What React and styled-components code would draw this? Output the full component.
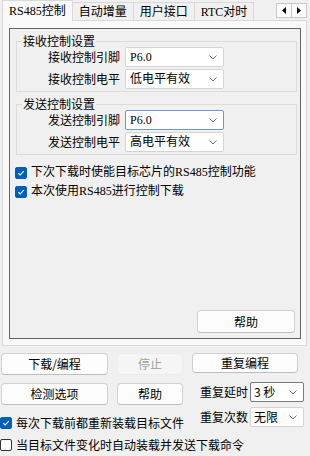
import React from 'react';
import styled, { createGlobalStyle } from 'styled-components';

const GlobalStyle = createGlobalStyle`
  html, body {
    margin: 0;
    padding: 0;
    background: #f0f0f0;
  }
  body {
    font-family: "Liberation Serif", "Noto Sans CJK SC", serif;
    font-size: 12px;
    color: #000;
  }
`;

const Check = () => (
  <svg width="12" height="12" viewBox="0 0 12 12">
    <path d="M2.8 6.2 L5 8.4 L9.3 3.8" fill="none" stroke="#fff" strokeWidth="1.3" />
  </svg>
);

const Chevron = () => (
  <svg width="8" height="5" viewBox="0 0 8 5">
    <polyline points="0.5,0.5 4,4 7.5,0.5" fill="none" stroke="#707070" strokeWidth="1" />
  </svg>
);

const CheckItem = ({ checked, children }) => (
  <CheckRow>
    <CheckBox $checked={checked}>{checked && <Check />}</CheckBox>
    <span>{children}</span>
  </CheckRow>
);

const Combo = ({ value, focused, dark }) => (
  <ComboBox $focused={focused} $dark={dark}>
    <span>{value}</span>
    <Chevron />
  </ComboBox>
);

const FieldRow = ({ label, value, focused }) => (
  <Row>
    <FieldLabel>{label}</FieldLabel>
    <Combo value={value} focused={focused} />
  </Row>
);

export default function App() {
  return (
    <>
      <GlobalStyle />
      <Window>
        <TabBar>
          <Tab $active>RS485控制</Tab>
          <Tab>自动增量</Tab>
          <Tab>用户接口</Tab>
          <Tab>RTC对时</Tab>
          <TabArrows>
            <ArrowButton>
              <svg width="4" height="7" viewBox="0 0 4 7"><polygon points="4,0 0,3.5 4,7" fill="#000" /></svg>
            </ArrowButton>
            <ArrowButton>
              <svg width="4" height="7" viewBox="0 0 4 7"><polygon points="0,0 4,3.5 0,7" fill="#000" /></svg>
            </ArrowButton>
          </TabArrows>
        </TabBar>

        <Panel>
          <Frame>
            <Group>
              <Legend>接收控制设置</Legend>
              <FieldRow label="接收控制引脚" value="P6.0" />
              <FieldRow label="接收控制电平" value="低电平有效" />
            </Group>
            <Group $spaced>
              <Legend>发送控制设置</Legend>
              <FieldRow label="发送控制引脚" value="P6.0" focused />
              <FieldRow label="发送控制电平" value="高电平有效" />
            </Group>
            <CheckList>
              <CheckItem checked>下次下载时使能目标芯片的RS485控制功能</CheckItem>
              <CheckItem checked>本次使用RS485进行控制下载</CheckItem>
            </CheckList>
            <HelpButton>帮助</HelpButton>
          </Frame>
        </Panel>

        <BottomArea>
          <ButtonRow>
            <Button $w={107}>下载/编程</Button>
            <Button $w={66} disabled>停止</Button>
            <Button $w={106} $h={20}>重复编程</Button>
          </ButtonRow>
          <SplitRow>
            <LeftCol>
              <ButtonRow>
                <Button $w={107}>检测选项</Button>
                <Button $w={66}>帮助</Button>
              </ButtonRow>
              <BottomCheck>
                <CheckItem checked>每次下载前都重新装载目标文件</CheckItem>
              </BottomCheck>
            </LeftCol>
            <RightCol>
              <OptionRow>
                <OptionLabel>重复延时</OptionLabel>
                <SmallCombo>
                  <Combo value="3 秒" dark />
                </SmallCombo>
              </OptionRow>
              <OptionRow>
                <OptionLabel>重复次数</OptionLabel>
                <SmallCombo>
                  <Combo value="无限" />
                </SmallCombo>
              </OptionRow>
            </RightCol>
          </SplitRow>
          <LastCheck>
            <CheckItem>当目标文件变化时自动装载并发送下载命令</CheckItem>
          </LastCheck>
        </BottomArea>
      </Window>
    </>
  );
}

const Window = styled.div`
  width: 310px;
  height: 456px;
  display: flex;
  flex-direction: column;
  overflow: hidden;
`;

const TabBar = styled.div`
  height: 20px;
  display: flex;
  align-items: flex-end;
  padding-left: 2px;
  position: relative;
  z-index: 1;
`;

const Tab = styled.div`
  height: ${({ $active }) => ($active ? '21px' : '18px')};
  margin-bottom: ${({ $active }) => ($active ? '-1px' : '0')};
  line-height: ${({ $active }) => ($active ? '20px' : '19px')};
  padding: 0 6px;
  box-sizing: border-box;
  border: 1px solid #d9d9d9;
  border-bottom: none;
  margin-left: ${({ $active }) => ($active ? '0' : '-1px')};
  background: ${({ $active }) => ($active ? '#f9f9f9' : '#f0f0f0')};
  white-space: nowrap;
`;

const TabArrows = styled.div`
  margin-left: auto;
  margin-right: 3px;
  align-self: flex-start;
  margin-top: 3px;
  display: flex;
  border: 1px solid #c8c8c8;
  background: #fbfbfb;
`;

const ArrowButton = styled.div`
  width: 14px;
  height: 13px;
  display: flex;
  align-items: center;
  justify-content: center;
  & + & {
    border-left: 1px solid #c8c8c8;
  }
`;

const Panel = styled.div`
  margin: 0 3px 0 2px;
  height: 326px;
  box-sizing: border-box;
  border: 1px solid #d9d9d9;
  background: #f9f9f9;
  padding: 7px 5px 6px 6px;
  display: flex;
`;

const Frame = styled.div`
  flex: 1;
  border: 1px solid #646464;
  background: #f0f0f0;
  padding: 6px 3px 5px 5px;
  display: flex;
  flex-direction: column;
`;

const Group = styled.fieldset`
  margin: ${({ $spaced }) => ($spaced ? '6px' : '0')} 0 0 1px;
  border: 1px solid #dcdcdc;
  padding: 0 0 2px 0;
  min-inline-size: 0;
`;

const Legend = styled.legend`
  margin-left: 5px;
  padding: 0 1px;
  line-height: 12px;
  font-family: "Noto Sans CJK SC", sans-serif;
`;

const Row = styled.div`
  display: grid;
  grid-template-columns: 103px 99px;
  column-gap: 5px;
  align-items: center;
  height: 20px;
  & + & {
    margin-top: 2px;
  }
`;

const FieldLabel = styled.div`
  text-align: right;
  line-height: 20px;
  font-family: "Noto Sans CJK SC", sans-serif;
`;

const ComboBox = styled.div`
  height: 20px;
  box-sizing: border-box;
  border: 1px solid ${({ $focused, $dark }) => ($focused ? '#6c9ad0' : $dark ? '#7a7a7a' : '#d4d4d4')};
  border-radius: 2px;
  background: #fff;
  display: flex;
  align-items: center;
  justify-content: space-between;
  padding: 0 6px 0 4px;
  white-space: nowrap;
  line-height: 18px;
`;

const CheckList = styled.div`
  margin-top: 8px;
  display: flex;
  flex-direction: column;
`;

const CheckRow = styled.div`
  display: flex;
  align-items: center;
  gap: 4px;
  height: 19px;
  line-height: 19px;
  white-space: nowrap;
  overflow: hidden;
`;

const CheckBox = styled.div`
  width: 12px;
  height: 12px;
  box-sizing: border-box;
  border-radius: 2px;
  flex-shrink: 0;
  background: ${({ $checked }) => ($checked ? '#005fb8' : '#fff')};
  border: 1px solid ${({ $checked }) => ($checked ? '#005fb8' : '#333')};
  display: flex;
  align-items: center;
  justify-content: center;
  svg {
    display: block;
  }
`;

const Button = styled.button`
  width: ${({ $w }) => $w}px;
  height: ${({ $h }) => $h || 22}px;
  padding: 0;
  box-sizing: border-box;
  border: 1px solid #d0d0d0;
  border-bottom-color: #bcbcbc;
  border-radius: 4px;
  background: #fdfdfd;
  font-family: "Noto Sans CJK SC", sans-serif;
  font-size: 12px;
  color: #000;
  line-height: 18px;

  &:disabled {
    background: #f5f5f5;
    border-color: #ececec;
    color: #a0a0a0;
  }
`;

const HelpButton = styled(Button)`
  width: 98px;
  height: 23px;
  margin-top: auto;
  align-self: flex-end;
  margin-right: 2px;
`;

const BottomArea = styled.div`
  padding-top: 7px;
  display: flex;
  flex-direction: column;
  font-family: "Noto Sans CJK SC", sans-serif;
`;

const ButtonRow = styled.div`
  display: flex;
  align-items: flex-start;
  gap: 9px;
  padding-left: 1px;
`;

const SplitRow = styled.div`
  display: flex;
  align-items: flex-start;
  margin-top: 8px;
`;

const LeftCol = styled.div`
  width: 188px;
  display: flex;
  flex-direction: column;
`;

const BottomCheck = styled.div`
  margin-top: 8px;
`;

const RightCol = styled.div`
  flex: 1;
  margin-top: -1px;
  padding-right: 6px;
  display: flex;
  flex-direction: column;
  align-items: flex-end;
  gap: 5px;
`;

const OptionRow = styled.div`
  display: flex;
  align-items: center;
  gap: 2px;
`;

const OptionLabel = styled.div`
  line-height: 20px;
`;

const SmallCombo = styled.div`
  width: 54px;
  > div {
    padding: 0 6px 0 3px;
  }
`;

const LastCheck = styled.div`
  margin-top: 3px;
`;
